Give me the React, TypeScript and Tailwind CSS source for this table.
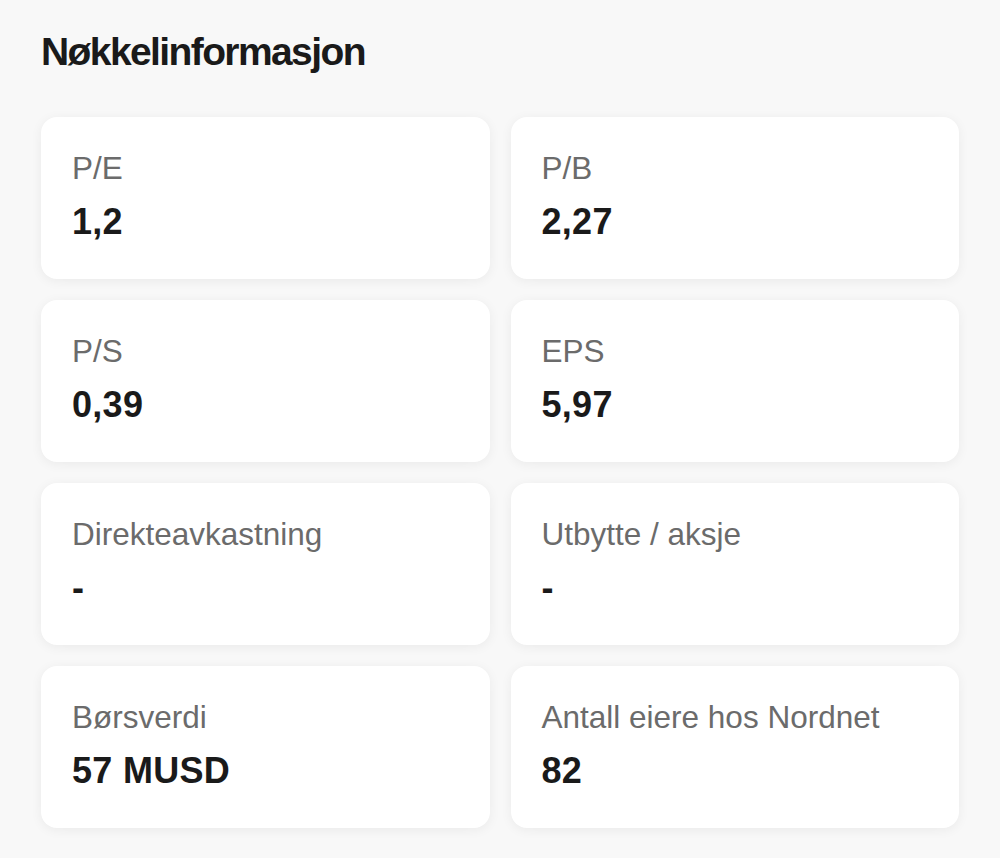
const items = [
  { label: "P/E", value: "1,2" },
  { label: "P/B", value: "2,27" },
  { label: "P/S", value: "0,39" },
  { label: "EPS", value: "5,97" },
  { label: "Direkteavkastning", value: "-" },
  { label: "Utbytte / aksje", value: "-" },
  { label: "Børsverdi", value: "57 MUSD" },
  { label: "Antall eiere hos Nordnet", value: "82" },
];

export default function App() {
  return (
    <div
      className="min-h-[858px] bg-[#f8f8f8] px-[41px] pt-[30px] pb-[28px]"
      style={{ fontFamily: '"Liberation Sans", Arial, sans-serif' }}
    >
      <h2 className="text-[39px] font-bold leading-[44px] tracking-[-1.6px] text-[#1a1a1a]">
        Nøkkelinformasjon
      </h2>
      <div className="mt-[43px] grid grid-cols-2 gap-x-[21px] gap-y-[21px]">
        {items.map((item) => (
          <div
            key={item.label}
            className="h-[162px] rounded-[16px] bg-white px-[31px] pt-[33px] shadow-[0_2px_12px_rgba(0,0,0,0.06)]"
          >
            <div className="text-[31.5px] leading-[36px] text-[#6b6b6b]">{item.label}</div>
            <div className="mt-[16px] text-[36px] font-bold leading-[40px] tracking-[0.3px] text-[#1a1a1a]">
              {item.value}
            </div>
          </div>
        ))}
      </div>
    </div>
  );
}
